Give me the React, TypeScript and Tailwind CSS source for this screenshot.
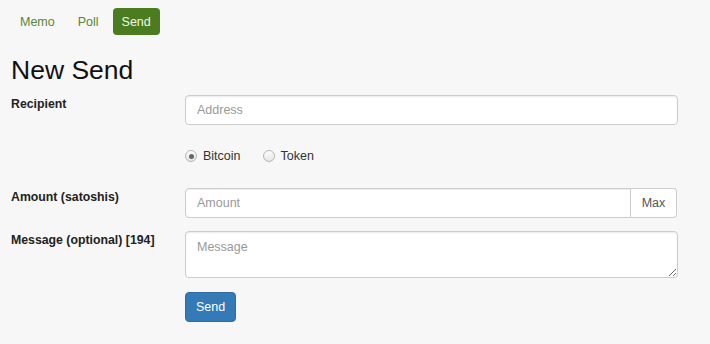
import { useState } from 'react'

const tabs = ['Memo', 'Poll', 'Send']

function Radio({ label, checked, onClick }: { label: string; checked: boolean; onClick: () => void }) {
  return (
    <button type="button" onClick={onClick} className="flex items-center gap-[6px] text-[#333]">
      <span className="w-[12px] h-[12px] rounded-full border border-[#b5b5b5] bg-gradient-to-b from-[#fdfdfd] to-[#e6e6e6] flex items-center justify-center">
        {checked && <span className="w-[5px] h-[5px] rounded-full bg-[#666]" />}
      </span>
      <span>{label}</span>
    </button>
  )
}

export default function App() {
  const [kind, setKind] = useState('bitcoin')

  return (
    <div
      className="min-h-screen bg-[#f7f7f7] px-[11px] text-[12.5px] leading-[18px] text-[#333]"
      style={{ fontFamily: '"Liberation Sans", Arial, sans-serif' }}
    >
      <nav className="pt-[8px] flex gap-[5px]">
        {tabs.map(t => (
          <a
            key={t}
            href="#"
            className={
              t === 'Send'
                ? 'h-[27px] px-[9px] flex items-center rounded-[4px] bg-[#4b7c1f] text-[#f3f6ea]'
                : 'h-[27px] px-[9px] flex items-center rounded-[4px] text-[#5a8537]'
            }
          >
            {t}
          </a>
        ))}
      </nav>

      <h2 className="mt-[21px] text-[26.5px] leading-[1.1] text-[#111]">New Send</h2>

      <form className="mt-[10px] pr-[21px] flex flex-col">
        <div className="flex">
          <label className="w-[174px] shrink-0 font-bold text-[12.3px] text-[#222]">Recipient</label>
          <input
            placeholder="Address"
            className="flex-1 h-[30px] px-[11px] bg-white border border-[#ccc] rounded-[4px] shadow-[inset_0_1px_1px_rgba(0,0,0,0.075)] placeholder:text-[#999] outline-none"
          />
        </div>

        <div className="flex mt-[22px] ml-[174px] h-[18px] items-center gap-[22px]">
          <Radio label="Bitcoin" checked={kind === 'bitcoin'} onClick={() => setKind('bitcoin')} />
          <Radio label="Token" checked={kind === 'token'} onClick={() => setKind('token')} />
        </div>

        <div className="flex mt-[23px]">
          <label className="w-[174px] shrink-0 font-bold text-[12.3px] text-[#222]">Amount (satoshis)</label>
          <div className="flex-1 flex h-[30px] mr-[1px]">
            <input
              placeholder="Amount"
              className="flex-1 min-w-0 px-[11px] bg-white border border-[#ccc] rounded-l-[4px] shadow-[inset_0_1px_1px_rgba(0,0,0,0.075)] placeholder:text-[#999] outline-none"
            />
            <span className="w-[46px] flex items-center justify-center bg-white border border-l-0 border-[#ccc] rounded-r-[4px] text-[#555]">
              Max
            </span>
          </div>
        </div>

        <div className="flex mt-[13px]">
          <label className="w-[174px] shrink-0 font-bold text-[12.3px] text-[#222]">Message (optional) [194]</label>
          <textarea
            placeholder="Message"
            className="flex-1 h-[47px] px-[11px] py-[6px] bg-white border border-[#ccc] rounded-[4px] shadow-[inset_0_1px_1px_rgba(0,0,0,0.075)] placeholder:text-[#999] outline-none"
          />
        </div>

        <div className="mt-[14px] ml-[174px]">
          <button
            type="button"
            className="w-[51px] h-[30px] bg-[#337ab7] border border-[#2e6da4] rounded-[4px] text-white"
          >
            Send
          </button>
        </div>
      </form>
    </div>
  )
}
